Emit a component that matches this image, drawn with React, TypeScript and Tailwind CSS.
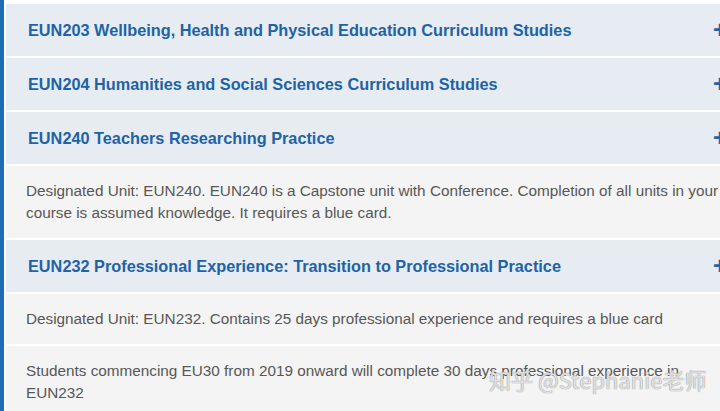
import React from "react";

const Header = ({ title }: { title: string }) => (
  <div className="flex h-[52px] shrink-0 items-center justify-between bg-[#e7ecf3] pl-[22px] pr-[6px]">
    <span className="text-[16.3px] font-bold text-[#1d63a6]">{title}</span>
    <span className="text-[24px] font-bold leading-none text-[#1d63a6]">+</span>
  </div>
);

const Body = ({ children }: { children: React.ReactNode }) => (
  <div className="shrink-0 bg-[#f4f4f4] py-[14px] pl-[20px] pr-[6px] text-[15.3px] leading-[22px] text-[#575757]">
    {children}
  </div>
);

export default function App() {
  return (
    <div
      className="relative h-[411px] w-[720px] overflow-hidden bg-white"
      style={{ fontFamily: '"Liberation Sans", Arial, sans-serif' }}
    >
      <div className="flex h-full items-start">
        <div className="h-full w-[4px] shrink-0 bg-[#1c6db4]" />
        <div className="ml-[2px] flex w-[727px] shrink-0 flex-col gap-[2px] pt-[4px]">
          <Header title="EUN203 Wellbeing, Health and Physical Education Curriculum Studies" />
          <Header title="EUN204 Humanities and Social Sciences Curriculum Studies" />
          <Header title="EUN240 Teachers Researching Practice" />
          <Body>
            Designated Unit: EUN240. EUN240 is a Capstone unit with Conference. Completion of all units in your
            course is assumed knowledge. It requires a blue card.
          </Body>
          <Header title="EUN232 Professional Experience: Transition to Professional Practice" />
          <Body>Designated Unit: EUN232. Contains 25 days professional experience and requires a blue card</Body>
          <Body>
            Students commencing EU30 from 2019 onward will complete 30 days professional experience in EUN232
          </Body>
        </div>
      </div>
      <div
        className="pointer-events-none absolute left-[489px] top-[368px] text-[22px] leading-none text-white/70"
        style={{
          fontFamily: '"Noto Sans CJK SC", "Liberation Sans", sans-serif',
          textShadow: "0 0 1px #999, 0 0 1px #999",
        }}
      >
        知乎 @Stephanie老师
      </div>
    </div>
  );
}
